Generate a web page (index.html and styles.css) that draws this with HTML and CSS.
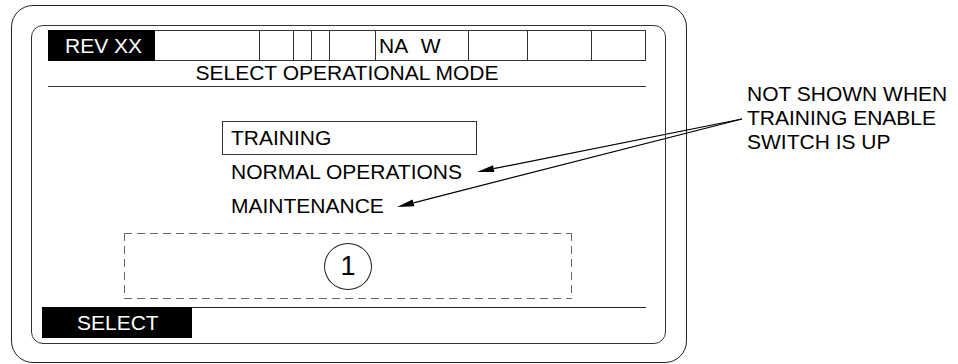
FILE: index.html
```html
<!DOCTYPE html>
<html lang="en">
<head>
    <meta charset="UTF-8">
    <title>Select Operational Mode</title>
    <link rel="stylesheet" href="styles.css">
</head>
<body>
    <div class="page">
        <div class="bezel">
            <div class="screen">
                <div class="status-row">
                    <div class="cell cell-rev">REV XX</div>
                    <div class="cell w105"></div>
                    <div class="cell w34"></div>
                    <div class="cell w18"></div>
                    <div class="cell w18"></div>
                    <div class="cell w46"></div>
                    <div class="cell w93 cell-naw">NA W</div>
                    <div class="cell w59"></div>
                    <div class="cell w64"></div>
                    <div class="cell w54"></div>
                </div>
                <div class="title">SELECT OPERATIONAL MODE</div>

                <ul class="modes">
                    <li class="mode selected">TRAINING</li>
                    <li class="mode">NORMAL OPERATIONS</li>
                    <li class="mode">MAINTENANCE</li>
                </ul>

                <div class="reserved">
                    <span class="callout-num">1</span>
                </div>

                <div class="softkeys">
                    <div class="softkey">SELECT</div>
                    <div class="softkey-rest"></div>
                </div>
            </div>
        </div>

        <div class="note">
            NOT SHOWN WHEN<br>
            TRAINING ENABLE<br>
            SWITCH IS UP
        </div>

        <!-- leader lines from the note to the hidden modes -->
        <svg class="leaders" width="958" height="364" viewBox="0 0 958 364">
            <line x1="742" y1="119" x2="493.5" y2="168.7" />
            <polygon points="477,172 494.4,172.1 493,165.2" />
            <line x1="742" y1="119" x2="413.5" y2="202.8" />
            <polygon points="397,207 414.4,206.2 412.6,199.4" />
        </svg>
    </div>
</body>
</html>
```

FILE: styles.css
```css
body {
    margin: 0;
    background-color: #fff;
    font-family: "Liberation Sans", Arial, Helvetica, sans-serif;
    font-size: 21px;
    color: #000;
}

.page {
    position: relative;
    width: 958px;
    height: 364px;
    display: flex;
    align-items: flex-start;
}

.bezel {
    box-sizing: border-box;
    width: 676px;
    height: 358px;
    margin: 5px 0 0 11px;
    padding: 19px 0 0 19px;
    border: 1px solid #222;
    border-radius: 22px;
}

.screen {
    box-sizing: border-box;
    width: 635px;
    height: 319px;
    border: 1px solid #333;
    border-radius: 12px;
    display: flex;
    flex-direction: column;
    align-items: flex-start;
}

/* top status row */
.status-row {
    display: flex;
    margin: 4px 0 0 16px;
    width: 598px;
}

.cell {
    box-sizing: border-box;
    flex: none;
    height: 31px;
    border-top: 1px solid #333;
    border-bottom: 1px solid #333;
    border-right: 1px solid #333;
    line-height: 29px;
}

.cell-rev {
    width: 107px;
    background-color: #000;
    border-color: #000;
    color: #fff;
    padding-left: 17px;
}

.cell-naw {
    padding-left: 3px;
    word-spacing: 8px;
}

.w105 { width: 105px; }
.w93 { width: 93px; }
.w64 { width: 64px; }
.w59 { width: 59px; }
.w54 { width: 54px; }
.w46 { width: 46px; }
.w34 { width: 34px; }
.w18 { width: 18px; }

.title {
    box-sizing: border-box;
    width: 598px;
    margin-left: 16px;
    height: 26px;
    line-height: 24px;
    border-bottom: 1px solid #333;
    text-align: center;
}

/* mode list */
.modes {
    list-style: none;
    margin: 34px 0 0 190px;
    padding: 0;
    display: flex;
    flex-direction: column;
    align-items: flex-start;
}

.mode {
    line-height: 32px;
    padding: 0 8px;
    border: 1px solid transparent;
}

.mode.selected {
    box-sizing: border-box;
    width: 255px;
    border-color: #333;
}

/* dashed reserved area */
.reserved {
    box-sizing: border-box;
    width: 448px;
    height: 66px;
    margin: 10px 0 0 92px;
    display: flex;
    align-items: center;
    justify-content: center;
    background:
        repeating-linear-gradient(90deg, #666 0 8px, transparent 8px 13px) top left / 100% 1px no-repeat,
        repeating-linear-gradient(90deg, #666 0 8px, transparent 8px 13px) bottom left / 100% 1px no-repeat,
        repeating-linear-gradient(180deg, #666 0 8px, transparent 8px 13px) top left / 1px 100% no-repeat,
        repeating-linear-gradient(180deg, #666 0 8px, transparent 8px 13px) top right / 1px 100% no-repeat;
}

.callout-num {
    box-sizing: border-box;
    width: 48px;
    height: 47px;
    border: 1px solid #222;
    border-radius: 50%;
    display: flex;
    align-items: center;
    justify-content: center;
    font-size: 27px;
}

/* soft key row */
.softkeys {
    display: flex;
    width: 604px;
    margin: 8px 0 0 10px;
}

.softkey {
    width: 150px;
    height: 31px;
    line-height: 31px;
    padding-left: 35px;
    box-sizing: border-box;
    background-color: #000;
    color: #fff;
}

.softkey-rest {
    flex: 1;
    border-top: 1px solid #222;
}

/* annotation */
.note {
    margin: 82px 0 0 60px;
    line-height: 24px;
}

.leaders {
    position: absolute;
    top: 0;
    left: 0;
    pointer-events: none;
}

.leaders line {
    stroke: #000;
    stroke-width: 1.2;
}

.leaders polygon {
    fill: #000;
}
```
